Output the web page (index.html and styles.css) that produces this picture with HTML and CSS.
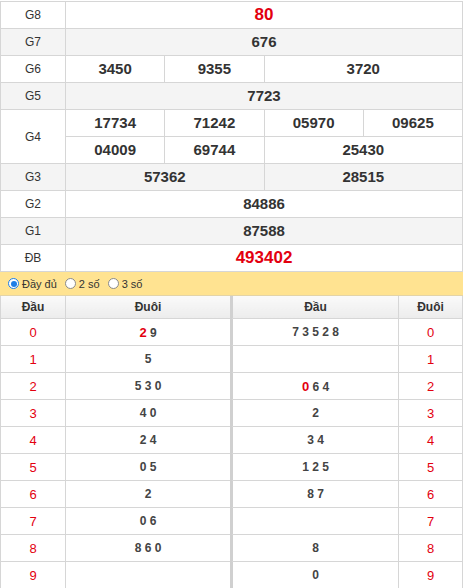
FILE: index.html
```html
<!DOCTYPE html>
<html>
<head>
<meta charset="utf-8">
<link rel="stylesheet" href="styles.css">
</head>
<body>
<table class="kq">
  <colgroup><col class="c-lbl"><col><col><col><col></colgroup>
  <tr><td class="lbl">G8</td><td colspan="4" class="num big red">80</td></tr>
  <tr class="alt"><td class="lbl">G7</td><td colspan="4" class="num">676</td></tr>
  <tr><td class="lbl">G6</td><td class="num">3450</td><td class="num">9355</td><td colspan="2" class="num">3720</td></tr>
  <tr class="alt"><td class="lbl">G5</td><td colspan="4" class="num">7723</td></tr>
  <tr><td class="lbl" rowspan="2">G4</td><td class="num">17734</td><td class="num">71242</td><td class="num">05970</td><td class="num">09625</td></tr>
  <tr><td class="num">04009</td><td class="num">69744</td><td colspan="2" class="num">25430</td></tr>
  <tr class="alt"><td class="lbl">G3</td><td colspan="2" class="num">57362</td><td colspan="2" class="num">28515</td></tr>
  <tr><td class="lbl">G2</td><td colspan="4" class="num">84886</td></tr>
  <tr class="alt"><td class="lbl">G1</td><td colspan="4" class="num">87588</td></tr>
  <tr><td class="lbl">ĐB</td><td colspan="4" class="num big red">493402</td></tr>
</table>
<div class="opts">
  <label class="opt"><span class="radio on"></span>Đầy đủ</label>
  <label class="opt"><span class="radio"></span>2 số</label>
  <label class="opt"><span class="radio"></span>3 số</label>
</div>
<div class="loto">
  <table class="lt left">
    <colgroup><col class="c-a"><col></colgroup>
    <tr class="hd"><th>Đầu</th><th>Đuôi</th></tr>
    <tr><td class="red">0</td><td class="dg"><b class="red">2</b> 9</td></tr>
    <tr><td class="red">1</td><td class="dg">5</td></tr>
    <tr><td class="red">2</td><td class="dg">5 3 0</td></tr>
    <tr><td class="red">3</td><td class="dg">4 0</td></tr>
    <tr><td class="red">4</td><td class="dg">2 4</td></tr>
    <tr><td class="red">5</td><td class="dg">0 5</td></tr>
    <tr><td class="red">6</td><td class="dg">2</td></tr>
    <tr><td class="red">7</td><td class="dg">0 6</td></tr>
    <tr><td class="red">8</td><td class="dg">8 6 0</td></tr>
    <tr><td class="red">9</td><td class="dg"></td></tr>
  </table>
  <table class="lt right">
    <colgroup><col><col class="c-b"></colgroup>
    <tr class="hd"><th>Đầu</th><th>Đuôi</th></tr>
    <tr><td class="dg">7 3 5 2 8</td><td class="red">0</td></tr>
    <tr><td class="dg"></td><td class="red">1</td></tr>
    <tr><td class="dg"><b class="red">0</b> 6 4</td><td class="red">2</td></tr>
    <tr><td class="dg">2</td><td class="red">3</td></tr>
    <tr><td class="dg">3 4</td><td class="red">4</td></tr>
    <tr><td class="dg">1 2 5</td><td class="red">5</td></tr>
    <tr><td class="dg">8 7</td><td class="red">6</td></tr>
    <tr><td class="dg"></td><td class="red">7</td></tr>
    <tr><td class="dg">8</td><td class="red">8</td></tr>
    <tr><td class="dg">0</td><td class="red">9</td></tr>
  </table>
</div>
</body>
</html>
```
FILE: styles.css
```css
html, body { margin: 0; padding: 0; background: #fff; }
body {
  font-family: "Liberation Sans", Arial, sans-serif;
  color: #333;
  width: 463px;
  padding-top: 1px;
}
table { border-collapse: collapse; table-layout: fixed; }
.kq { width: 463px; }
.kq .c-lbl { width: 65px; }
.kq td {
  border: 1px solid #d6d6d6;
  height: 26px;
  padding: 0;
  text-align: center;
  vertical-align: middle;
  line-height: 16px;
}
.kq tr.alt td { background: #f4f4f4; }
.kq td.lbl { font-size: 12px; color: #333; background: #fff; }
.kq tr.alt td.lbl { background: #f4f4f4; }
.num { font-size: 15px; font-weight: bold; color: #333; }
.num.big { font-size: 17px; }
.red { color: #e3000f; }
.opts {
  background: #ffe391;
  height: 23px;
  border-bottom: 1px solid #e3d4a8;
  display: flex;
  align-items: center;
  padding-left: 8px;
  gap: 8px;
  font-size: 11px;
  color: #333;
}
.opt { display: flex; align-items: center; gap: 3px; }
.radio {
  width: 9px; height: 9px;
  border-radius: 50%;
  border: 1px solid #8a8a8a;
  background: #fff;
  position: relative;
}
.radio.on { border-color: #1e7ee6; }
.radio.on::after {
  content: "";
  position: absolute;
  left: 1.5px; top: 1.5px;
  width: 6px; height: 6px;
  border-radius: 50%;
  background: #1e7ee6;
}
.loto { display: flex; width: 463px; }
.lt.left { width: 232px; }
.lt.right { width: 231px; }
.lt .c-a { width: 65px; }
.lt .c-b { width: 64px; }
.lt th {
  height: 22px;
  padding: 0;
  font-size: 12px;
  font-weight: bold;
  color: #333;
  background: linear-gradient(#fafafa, #ececec);
  border: 1px solid #d6d6d6;
  border-top: none;
}
.lt td {
  border: 1px solid #d6d6d6;
  height: 26px;
  padding: 0;
  text-align: center;
  vertical-align: middle;
  font-size: 13px;
}
.lt.left tr > :last-child { border-right: 2px solid #d0d0d0; }
.lt.right tr > :first-child { border-left: 1px solid #d0d0d0; }
.dg { font-weight: bold; color: #444; font-size: 12px !important; }
.dg b { font-size: 13px; }
```
